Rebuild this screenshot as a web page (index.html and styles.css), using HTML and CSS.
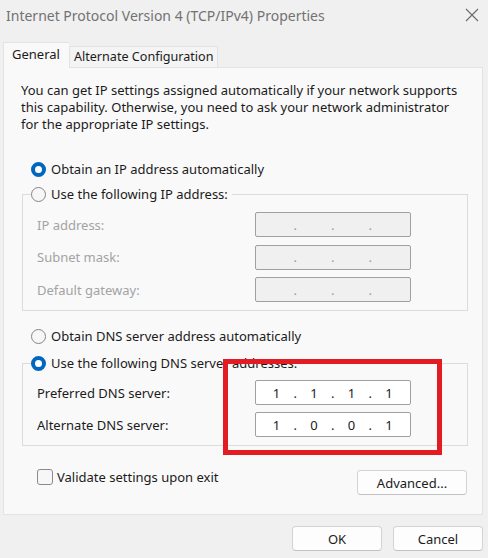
FILE: index.html
```html
<!DOCTYPE html>
<html>
<head>
<meta charset="utf-8">
<link rel="stylesheet" href="styles.css">
</head>
<body>
<div class="window">
  <div class="titlebar">
    <span class="title">Internet Protocol Version 4 (TCP/IPv4) Properties</span>
    <svg class="close" width="14" height="14" viewBox="0 0 14 14"><path d="M1 1 L13 13 M13 1 L1 13" stroke="#6a6a6a" stroke-width="1.1" fill="none"/></svg>
  </div>
  <div class="tabs">
    <div class="tab active">General</div>
    <div class="tab">Alternate Configuration</div>
  </div>
  <div class="panel">
    <p class="desc">You can get IP settings assigned automatically if your network supports this capability. Otherwise, you need to ask your network administrator for the appropriate IP settings.</p>

    <div class="option first"><span class="radio on"></span><span>Obtain an IP address automatically</span></div>

    <fieldset class="group g1">
      <legend class="option"><span class="radio"></span><span>Use the following IP address:</span></legend>
      <div class="rows">
        <div class="row"><span class="label disabled">IP address:</span><div class="ip dis"><span class="oct"></span><span class="dot">.</span><span class="oct"></span><span class="dot">.</span><span class="oct"></span><span class="dot">.</span><span class="oct"></span></div></div>
        <div class="row"><span class="label disabled">Subnet mask:</span><div class="ip dis"><span class="oct"></span><span class="dot">.</span><span class="oct"></span><span class="dot">.</span><span class="oct"></span><span class="dot">.</span><span class="oct"></span></div></div>
        <div class="row"><span class="label disabled">Default gateway:</span><div class="ip dis"><span class="oct"></span><span class="dot">.</span><span class="oct"></span><span class="dot">.</span><span class="oct"></span><span class="dot">.</span><span class="oct"></span></div></div>
      </div>
    </fieldset>

    <div class="option dns1"><span class="radio"></span><span>Obtain DNS server address automatically</span></div>

    <fieldset class="group g2">
      <legend class="option"><span class="radio on"></span><span>Use the following DNS server addresses:</span></legend>
      <div class="rows">
        <div class="row"><span class="label">Preferred DNS server:</span><div class="ip"><span class="oct">1</span><span class="dot">.</span><span class="oct">1</span><span class="dot">.</span><span class="oct">1</span><span class="dot">.</span><span class="oct">1</span></div></div>
        <div class="row"><span class="label">Alternate DNS server:</span><div class="ip"><span class="oct">1</span><span class="dot">.</span><span class="oct">0</span><span class="dot">.</span><span class="oct">0</span><span class="dot">.</span><span class="oct">1</span></div></div>
      </div>
    </fieldset>

    <div class="bottom">
      <div class="check"><span class="box"></span><span>Validate settings upon exit</span></div>
      <button class="btn adv">Advanced...</button>
    </div>
  </div>
  <div class="footer">
    <button class="btn">OK</button>
    <button class="btn">Cancel</button>
  </div>
  <div class="highlight"></div>
</div>
</body>
</html>
```

FILE: styles.css
```css
* { box-sizing: border-box; }
html, body { margin: 0; padding: 0; }
body {
  background: #f0f0f0;
  font-family: "Noto Sans", "Open Sans", sans-serif;
  font-size: 13px;
  color: #1b1b1b;
  width: 488px;
  height: 558px;
  overflow: hidden;
}
.window { position: relative; width: 488px; height: 558px; }
.titlebar {
  height: 30px;
  display: flex;
  align-items: center;
  justify-content: space-between;
  padding: 0 9px 0 6px;
}
.title { font-size: 14px; color: #727272; }
.close { display: block; }
.tabs {
  display: flex;
  align-items: flex-end;
  margin: 12px 0 0 3px;
  height: 25px;
}
.tab {
  height: 21px;
  border: 1px solid #e3e3e3;
  border-bottom: none;
  background: #f4f4f4;
  padding: 0 3px 0 4px;
  line-height: 20px;
  font-size: 12.6px;
}
.tab.active {
  background: #f9f9f9;
  padding: 0 9px 0 8px;
  line-height: 22px;
  border-right: none;
  position: relative;
  z-index: 1;
  margin-bottom: -1px;
  height: 26px;
  font-size: 13px;
}
.panel {
  margin: 0 5px 0 3px;
  height: 448px;
  border: 1px solid #e3e3e3;
  background: #f9f9f9;
  padding: 14px 0 0 0;
  display: flex;
  flex-direction: column;
}
.desc {
  margin: 0 0 0 17px;
  line-height: 17px;
  width: 440px;
}
.option {
  display: flex;
  align-items: center;
  gap: 5px;
  height: 16px;
  line-height: 16px;
}
.option.first { margin: 28px 0 0 27px; }
.option.dns1 { margin: 17px 0 0 27px; }
.radio {
  width: 15px;
  height: 15px;
  border-radius: 50%;
  border: 1px solid #858585;
  background: #f7f7f7;
  flex: none;
}
.radio.on {
  border: 4px solid #0067c0;
  background: #fff;
}
.group {
  margin: 9px 0 0 18px;
  width: 446px;
  border: 1px solid #dcdcdc;
  padding: 0;
  min-width: 0;
}
.group legend {
  margin-left: 8px;
  padding: 0 4px 0 0;
}
.rows {
  display: flex;
  flex-direction: column;
  gap: 7.5px;
  padding: 10px 0 8px 14px;
}
.g2 { margin-top: 11px; }
.g2 .rows { padding-top: 9px; padding-bottom: 8px; gap: 7px; }
.row {
  display: flex;
  align-items: center;
  height: 25px;
}
.label { width: 218px; flex: none; }
.label.disabled { color: #a3a3a3; }
.ip {
  width: 156px;
  height: 25px;
  border: 1px solid #a0a0a0;
  border-radius: 2px;
  background: #fff;
  display: flex;
  align-items: center;
  padding-left: 10.5px;
  font-size: 13px;
}
.ip.dis { background: #f0f0f0; color: #9a9aa6; }
.oct { width: 20px; text-align: center; }
.dot { width: 17.5px; text-align: center; }
.bottom {
  display: flex;
  justify-content: space-between;
  align-items: flex-start;
  margin: 23px 0 0 33px;
  width: 430px;
}
.check {
  display: flex;
  align-items: center;
  gap: 4px;
  height: 16px;
}
.box {
  width: 16px;
  height: 16px;
  border: 1.5px solid #8a8a8a;
  border-radius: 3px;
  background: #f7f7f7;
}
.btn {
  font-family: inherit;
  font-size: 13px;
  color: #1b1b1b;
  width: 90px;
  height: 25px;
  background: #fdfdfd;
  border: 1px solid #d3d3d3;
  border-bottom-color: #c2c2c2;
  border-radius: 4px;
  padding: 0;
}
.btn.adv { width: 110px; margin-top: 1px; }
.footer {
  display: flex;
  justify-content: flex-end;
  gap: 11px;
  padding: 11px 5px 0 0;
}
.highlight {
  position: absolute;
  left: 223px;
  top: 359px;
  width: 219px;
  height: 96px;
  border: 5px solid #e31b23;
}
```
